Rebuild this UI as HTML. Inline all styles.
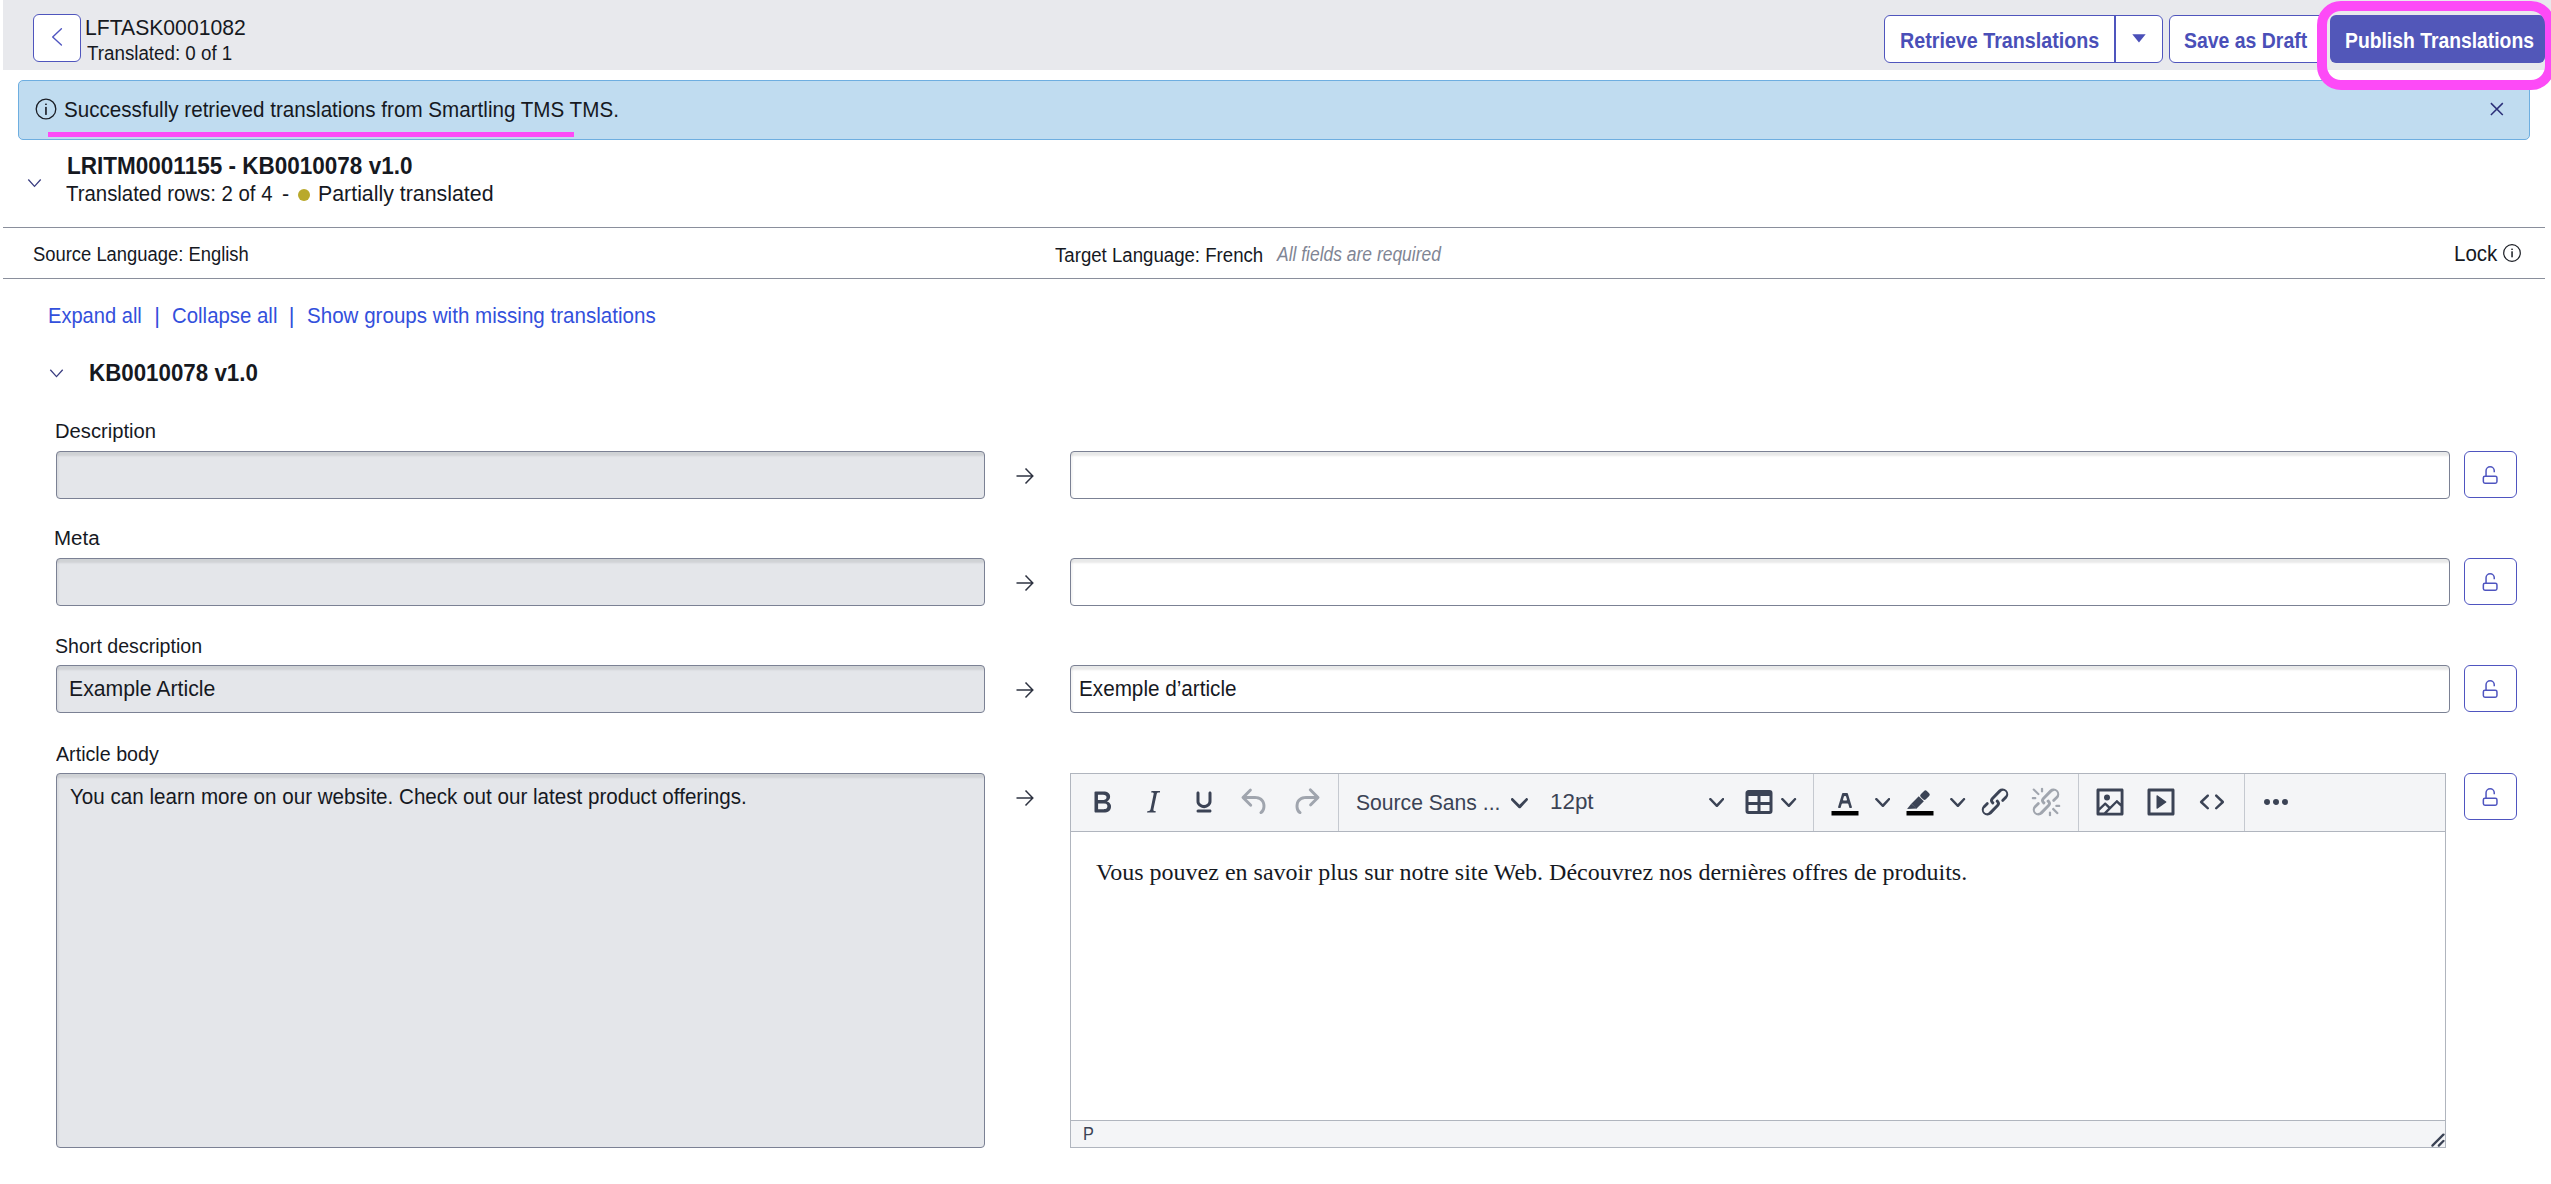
<!DOCTYPE html>
<html><head><meta charset="utf-8">
<style>
*{box-sizing:border-box;margin:0;padding:0}
html,body{width:2551px;height:1184px;overflow:hidden;background:#fff}
body{position:relative;font-family:"Liberation Sans",sans-serif;color:#16191f}
.a{position:absolute;white-space:nowrap;line-height:1}
.s{display:inline-block;transform-origin:0 0}
.hdr{position:absolute;left:3px;top:0;width:2548px;height:70px;background:#e8e9ed}
.btn{position:absolute;border:1px solid #4f55bd;border-radius:6px;background:#fff}
.bt{color:#4a4fb8;font-weight:bold;font-size:21px}
.alert{position:absolute;left:18px;top:80px;width:2512px;height:60px;background:#c0dcf0;border:1px solid #6eaee0;border-radius:5px}
.hl{position:absolute;left:3px;width:2542px;height:1px;background:#8a8f9c}
.lnk{color:#3350dc;font-size:22px}
.lbl{font-size:19.5px}
.fld{position:absolute;border:1px solid #7b8194;border-radius:4px;overflow:hidden}
.src{background:#e4e6ea}
.src:before{content:"";position:absolute;left:0;right:0;top:0;bottom:0;box-shadow:inset 0 5px 2px -1px rgba(0,15,10,.09),inset 3px 0 2px -1px rgba(0,15,10,.045)}
.tgt{background:#fff}
.tgt:before{content:"";position:absolute;left:0;right:0;top:0;bottom:0;box-shadow:inset 0 5px 2px -1px rgba(0,15,10,.09),inset 3px 0 2px -1px rgba(0,15,10,.045)}
.lock{position:absolute;left:2464px;width:53px;height:47px;border:1px solid #4f55c0;border-radius:6px;background:#fff}
.lock svg{position:absolute;left:17px;top:13px}
.arr{position:absolute;left:1014px}
.ic{position:absolute;top:784px;fill:#3b4355}
.chev{position:absolute;top:798px}
.sep{position:absolute;top:774px;width:1px;height:57px;background:#c5c9d0}
</style></head><body>

<div class="hdr"></div>
<div class="btn" style="left:33px;top:14px;width:48px;height:48px"></div>
<svg class="a" style="left:33px;top:14px" width="48" height="48" viewBox="0 0 48 48"><path d="M28.4 14.8 L19.7 23 L28.4 31" fill="none" stroke="#4f55c0" stroke-width="1.4" stroke-linecap="round" stroke-linejoin="round"/></svg>
<div class="a" style="left:85.4px;top:16.9px;font-size:22px"><span class="s" id="t_lftask" style="transform:scaleX(0.9614)">LFTASK0001082</span></div>
<div class="a" style="left:87px;top:43px;font-size:20px"><span class="s" id="t_tr01" style="transform:scaleX(0.938)">Translated: 0 of 1</span></div>

<div class="btn" style="left:1884px;top:15px;width:279px;height:48px"></div>
<div class="a" style="left:2114px;top:15px;width:2px;height:48px;background:#4f55bd"></div>
<div class="a bt" style="left:1900.1px;top:30px;font-size:22px"><span class="s" id="t_retr" style="transform:scaleX(0.8957)">Retrieve Translations</span></div>
<svg class="a" style="left:2131px;top:33px" width="16" height="10" viewBox="0 0 16 10"><path d="M1.3 1.2 H14.7 L8 9.4 Z" fill="#4a4fb8"/></svg>
<div class="btn" style="left:2169px;top:15px;width:157px;height:48px"></div>
<div class="a bt" style="left:2184.2px;top:30px;font-size:22px"><span class="s" id="t_draft" style="transform:scaleX(0.8833)">Save as Draft</span></div>
<div class="a" style="left:2330px;top:15px;width:215px;height:48px;background:#5257b9;border-radius:6px"></div>
<div class="a bt" style="left:2345.1px;top:30px;color:#fff;font-size:22px"><span class="s" id="t_pub" style="transform:scaleX(0.8783)">Publish Translations</span></div>

<div class="alert"></div>
<svg class="a" style="left:35px;top:98px" width="22" height="22" viewBox="0 0 22 22"><circle cx="11" cy="11" r="9.8" fill="none" stroke="#1b1e25" stroke-width="1.3"/><rect x="10.05" y="8.9" width="1.8" height="8" fill="#2a2e38"/><rect x="10.05" y="5.6" width="1.8" height="1.4" fill="#2a2e38"/></svg>
<div class="a" style="left:63.7px;top:100.05px;font-size:21.25px"><span class="s" id="t_alert" style="transform:scaleX(0.9701)">Successfully retrieved translations from Smartling TMS TMS.</span></div>
<div class="a" style="left:48px;top:132px;width:526px;height:5px;background:#fd4af7"></div>
<svg class="a" style="left:2486px;top:99px" width="21" height="21" viewBox="0 0 21 21"><path d="M4.9 4.1 L16.8 16 M16.8 4.1 L4.9 16" stroke="#2b2f78" stroke-width="1.5"/></svg>

<svg class="a" style="left:26px;top:176px" width="17" height="13" viewBox="0 0 17 13"><path d="M2.3 3.5 L8.5 10.4 L14.7 3.5" fill="none" stroke="#3a3d80" stroke-width="1.3"/></svg>
<div class="a" style="left:66.5px;top:155.35px;font-size:23px;font-weight:bold"><span class="s" id="t_lritm" style="transform:scaleX(0.979)">LRITM0001155 - KB0010078 v1.0</span></div>
<div class="a" style="left:65.7px;top:184.15px;font-size:21.5px"><span class="s" id="t_rows" style="transform:scaleX(0.9478)">Translated rows: 2 of 4</span></div>
<div class="a" style="left:282px;top:183.5px;font-size:21.5px">-</div>
<div class="a" style="left:298px;top:189px;width:12px;height:12px;border-radius:50%;background:#b9a92b"></div>
<div class="a" style="left:317.9px;top:184.15px;font-size:21.5px"><span class="s" id="t_partial" style="transform:scaleX(0.9924)">Partially translated</span></div>

<div class="hl" style="top:227px"></div>
<div class="a" style="left:33.1px;top:243.95px;font-size:20px"><span class="s" id="t_src" style="transform:scaleX(0.9195)">Source Language: English</span></div>
<div class="a" style="left:1054.5px;top:244.6px;font-size:20px"><span class="s" id="t_tgt" style="transform:scaleX(0.9316)">Target Language: French</span></div>
<div class="a" style="left:1277.4px;top:243.6px;font-size:20px;font-style:italic;color:#7f8594"><span class="s" id="t_ital" style="transform:scaleX(0.8724)">All fields are required</span></div>
<div class="a" style="left:2453.7px;top:243.2px;font-size:22px"><span class="s" id="t_lock" style="transform:scaleX(0.9335)">Lock</span></div>
<svg class="a" style="left:2503px;top:244px" width="19" height="19" viewBox="0 0 19 19"><circle cx="9" cy="9" r="8.3" fill="none" stroke="#1b1e25" stroke-width="1.2"/><rect x="8.3" y="7.3" width="1.5" height="6" fill="#1b1e25"/><rect x="8.3" y="4.6" width="1.5" height="1.4" fill="#1b1e25"/></svg>
<div class="hl" style="top:278px"></div>

<div class="a lnk" style="left:47.7px;top:305.1px;font-size:22px"><span class="s" id="t_exp" style="transform:scaleX(0.9132)">Expand all</span></div>
<div class="a lnk" style="left:154.2px;top:305.1px">|</div>
<div class="a lnk" style="left:171.9px;top:305.1px;font-size:22px"><span class="s" id="t_col" style="transform:scaleX(0.9271)">Collapse all</span></div>
<div class="a lnk" style="left:288.7px;top:305.1px">|</div>
<div class="a lnk" style="left:306.9px;top:305.1px;font-size:22px"><span class="s" id="t_show" style="transform:scaleX(0.9349)">Show groups with missing translations</span></div>

<svg class="a" style="left:48px;top:366px" width="17" height="14" viewBox="0 0 17 14"><path d="M2.3 3.8 L8.5 10.6 L14.7 3.8" fill="none" stroke="#3a3d80" stroke-width="1.3"/></svg>
<div class="a" style="left:89.1px;top:362.35px;font-size:23px;font-weight:bold"><span class="s" id="t_kb" style="transform:scaleX(0.971)">KB0010078 v1.0</span></div>

<!-- rows -->
<div class="a lbl" style="left:54.5px;top:421.2px;font-size:20px"><span class="s" id="t_desc" style="transform:scaleX(1.0094)">Description</span></div>
<div class="fld src" style="left:56px;top:451px;width:929px;height:48px"></div>
<svg class="arr" style="top:466px" width="22" height="20" viewBox="0 0 22 20"><path d="M2.5 10 H18.5 M11.5 2.5 L18.8 10 L11.5 17.5" fill="none" stroke="#2e3341" stroke-width="1.5"/></svg>
<div class="fld tgt" style="left:1070px;top:451px;width:1380px;height:48px"></div>
<div class="lock" style="top:451px"><svg width="19" height="20" viewBox="0 0 19 20"><path d="M4.05 11.2 V5.85 A4.1 4.1 0 0 1 12.25 5.85 V7.3" fill="none" stroke="#4f55c0" stroke-width="1.5"/><rect x="1.35" y="11.15" width="13.6" height="7" rx="1.6" fill="none" stroke="#4f55c0" stroke-width="1.5"/></svg></div>

<div class="a lbl" style="left:54px;top:527.9px;font-size:20px"><span class="s" id="t_meta" style="transform:scaleX(1.0255)">Meta</span></div>
<div class="fld src" style="left:56px;top:558px;width:929px;height:48px"></div>
<svg class="arr" style="top:573px" width="22" height="20" viewBox="0 0 22 20"><path d="M2.5 10 H18.5 M11.5 2.5 L18.8 10 L11.5 17.5" fill="none" stroke="#2e3341" stroke-width="1.5"/></svg>
<div class="fld tgt" style="left:1070px;top:558px;width:1380px;height:48px"></div>
<div class="lock" style="top:558px"><svg width="19" height="20" viewBox="0 0 19 20"><path d="M4.05 11.2 V5.85 A4.1 4.1 0 0 1 12.25 5.85 V7.3" fill="none" stroke="#4f55c0" stroke-width="1.5"/><rect x="1.35" y="11.15" width="13.6" height="7" rx="1.6" fill="none" stroke="#4f55c0" stroke-width="1.5"/></svg></div>

<div class="a lbl" style="left:55px;top:636.45px;font-size:20px"><span class="s" id="t_short" style="transform:scaleX(0.9798)">Short description</span></div>
<div class="fld src" style="left:56px;top:665px;width:929px;height:48px"></div>
<div class="a" style="left:69.2px;top:677.8px;font-size:22px"><span class="s" id="t_ex" style="transform:scaleX(0.9647)">Example Article</span></div>
<svg class="arr" style="top:680px" width="22" height="20" viewBox="0 0 22 20"><path d="M2.5 10 H18.5 M11.5 2.5 L18.8 10 L11.5 17.5" fill="none" stroke="#2e3341" stroke-width="1.5"/></svg>
<div class="fld tgt" style="left:1070px;top:665px;width:1380px;height:48px"></div>
<div class="a" style="left:1078.9px;top:678.4px;font-size:22px"><span class="s" id="t_exf" style="transform:scaleX(0.9402)">Exemple d’article</span></div>
<div class="lock" style="top:665px"><svg width="19" height="20" viewBox="0 0 19 20"><path d="M4.05 11.2 V5.85 A4.1 4.1 0 0 1 12.25 5.85 V7.3" fill="none" stroke="#4f55c0" stroke-width="1.5"/><rect x="1.35" y="11.15" width="13.6" height="7" rx="1.6" fill="none" stroke="#4f55c0" stroke-width="1.5"/></svg></div>

<div class="a lbl" style="left:56px;top:744.45px;font-size:20px"><span class="s" id="t_art" style="transform:scaleX(0.9837)">Article body</span></div>
<div class="fld src" style="left:56px;top:773px;width:929px;height:375px"></div>
<div class="a" style="left:69.9px;top:786.25px;font-size:22px"><span class="s" id="t_you" style="transform:scaleX(0.9363)">You can learn more on our website. Check out our latest product offerings.</span></div>
<svg class="arr" style="top:788px" width="22" height="20" viewBox="0 0 22 20"><path d="M2.5 10 H18.5 M11.5 2.5 L18.8 10 L11.5 17.5" fill="none" stroke="#2e3341" stroke-width="1.5"/></svg>
<div class="lock" style="top:773px"><svg width="19" height="20" viewBox="0 0 19 20"><path d="M4.05 11.2 V5.85 A4.1 4.1 0 0 1 12.25 5.85 V7.3" fill="none" stroke="#4f55c0" stroke-width="1.5"/><rect x="1.35" y="11.15" width="13.6" height="7" rx="1.6" fill="none" stroke="#4f55c0" stroke-width="1.5"/></svg></div>

<!-- editor -->
<div class="a" style="left:1070px;top:773px;width:1376px;height:375px;border:1px solid #b0b5be;background:#fff"></div>
<div class="a" style="left:1071px;top:774px;width:1374px;height:58px;background:#f4f5f7;border-bottom:1px solid #b0b5be"></div>
<div class="a" style="left:1071px;top:1120px;width:1374px;height:27px;background:#f4f5f7;border-top:1px solid #b0b5be"></div>
<div class="sep" style="left:1338px"></div>
<div class="sep" style="left:1813px"></div>
<div class="sep" style="left:2078px"></div>
<div class="sep" style="left:2244px"></div>

<svg class="ic" style="left:1084px" width="36" height="36" viewBox="0 0 24 24"><path d="M7.8 19c-.3 0-.5 0-.6-.2l-.2-.5V5.7c0-.2 0-.4.2-.5l.6-.2h5c1.5 0 2.7.3 3.5 1 .7.6 1.1 1.4 1.1 2.5a3 3 0 0 1-.6 1.9c-.4.6-1 1-1.6 1.2.4.1.9.3 1.3.6s.8.7 1 1.2c.4.4.5 1 .5 1.6 0 1.3-.4 2.3-1.3 3-.8.7-2.1 1-3.8 1H7.8Zm5-8.3c.6 0 1.2-.1 1.6-.5.4-.3.6-.7.6-1.3 0-1.1-.8-1.7-2.3-1.7H9.3v3.5h3.4Zm.5 6c.7 0 1.3-.1 1.7-.4.4-.4.6-.9.6-1.5s-.2-1-.7-1.4c-.4-.3-1-.4-2-.4H9.4v3.8h4Z" fill-rule="evenodd"/></svg>
<svg class="ic" style="left:1135px" width="36" height="36" viewBox="0 0 24 24"><path d="m16.7 4.7-.1.9h-.3c-.6 0-1 0-1.4.3-.3.3-.4.6-.5 1.1l-2.1 9.8v.6c0 .5.4.8 1.4.8h.2l-.2.8H8l.2-.8h.2c1.1 0 1.8-.5 2-1.5l2-9.8.1-.5c0-.6-.4-.8-1.4-.8h-.3l.2-.9h5.8Z" fill-rule="evenodd"/></svg>
<svg class="ic" style="left:1185.5px" width="36" height="36" viewBox="0 0 24 24"><path d="M16 5c.6 0 1 .4 1 1v5.5a4 4 0 0 1-.4 1.8l-1 1.4a5.3 5.3 0 0 1-5.5 1 5 5 0 0 1-1.6-1c-.5-.4-.8-.9-1.1-1.4a4 4 0 0 1-.4-1.8V6c0-.6.4-1 1-1s1 .4 1 1v5.5c0 .3 0 .6.2 1l.6.7a3.3 3.3 0 0 0 2.2.8 3.4 3.4 0 0 0 2.2-.8c.3-.2.4-.5.6-.8l.2-.9V6c0-.6.4-1 1-1ZM8 17h8c.6 0 1 .4 1 1s-.4 1-1 1H8a1 1 0 0 1 0-2Z" fill-rule="evenodd"/></svg>
<svg class="ic" style="left:1237px;fill:#a0a5ae" width="36" height="36" viewBox="0 0 24 24"><path d="M6.4 8H12c3.7 0 6.2 2 6.8 5.1.6 2.7-.4 5.6-2.3 6.8a1 1 0 0 1-1-1.8c1.1-.6 1.8-2.7 1.4-4.6-.5-2.1-2.1-3.5-4.9-3.5H6.4l3.3 3.3a1 1 0 1 1-1.4 1.4l-5-5a1 1 0 0 1 0-1.4l5-5a1 1 0 0 1 1.4 1.4L6.4 8Z" fill-rule="nonzero"/></svg>
<svg class="ic" style="left:1287.5px;fill:#a0a5ae" width="36" height="36" viewBox="0 0 24 24"><path d="M17.6 10H12c-2.8 0-4.4 1.4-4.9 3.5-.4 2 .3 4 1.4 4.6a1 1 0 1 1-1 1.8c-2-1.2-2.9-4.1-2.3-6.8.6-3 3-5.1 6.8-5.1h5.6l-3.3-3.3a1 1 0 1 1 1.4-1.4l5 5a1 1 0 0 1 0 1.4l-5 5a1 1 0 0 1-1.4-1.4l3.3-3.3Z" fill-rule="nonzero"/></svg>

<div class="a" style="left:1356px;top:791.8px;font-size:22px;color:#3b4355"><span class="s" id="t_ff" style="transform:scaleX(0.9598)">Source Sans ...</span></div>
<svg class="chev" style="left:1511px" width="17" height="12" viewBox="0 0 10 7"><path d="M8.7 .2c.3-.3.8-.3 1 0 .4.4.4.9 0 1.2L5.7 5.8c-.3.3-.9.3-1.2 0L.2 1.4a.8.8 0 0 1 0-1.2c.3-.3.8-.3 1.1 0L5 4l3.7-3.8Z" fill="#3b4355"/></svg>
<div class="a" style="left:1550.2px;top:791.35px;font-size:22px;color:#3b4355"><span class="s" id="t_pt" style="transform:scaleX(1.0167)">12pt</span></div>
<svg class="chev" style="left:1708.5px" width="15.5" height="10.5" viewBox="0 0 10 7"><path d="M8.7 .2c.3-.3.8-.3 1 0 .4.4.4.9 0 1.2L5.7 5.8c-.3.3-.9.3-1.2 0L.2 1.4a.8.8 0 0 1 0-1.2c.3-.3.8-.3 1.1 0L5 4l3.7-3.8Z" fill="#3b4355"/></svg>
<svg class="ic" style="left:1741px" width="36" height="36" viewBox="0 0 24 24"><path d="M19 4a2 2 0 0 1 2 2v12a2 2 0 0 1-2 2H5a2 2 0 0 1-2-2V6c0-1.1.9-2 2-2h14ZM5 14v4h6v-4H5Zm14 0h-6v4h6v-4Zm0-6h-6v4h6V8ZM5 8v4h6V8H5Z" fill-rule="nonzero"/></svg>
<svg class="chev" style="left:1781px" width="15.5" height="10.5" viewBox="0 0 10 7"><path d="M8.7 .2c.3-.3.8-.3 1 0 .4.4.4.9 0 1.2L5.7 5.8c-.3.3-.9.3-1.2 0L.2 1.4a.8.8 0 0 1 0-1.2c.3-.3.8-.3 1.1 0L5 4l3.7-3.8Z" fill="#3b4355"/></svg>

<svg class="ic" style="left:1827px" width="36" height="36" viewBox="0 0 24 24"><path d="M3 18h18v3H3z" fill="#000"/><path d="M8.7 16h-.8a.5.5 0 0 1-.5-.6l2.7-9c.1-.3.3-.4.5-.4h2.8c.2 0 .4.1.5.4l2.7 9a.5.5 0 0 1-.5.6h-.8a.5.5 0 0 1-.4-.4l-.7-2.2c0-.3-.3-.4-.5-.4h-3.4c-.2 0-.4.1-.5.4l-.7 2.2c0 .3-.2.4-.4.4Zm2.6-7.6-.6 2a.5.5 0 0 0 .5.6h1.6a.5.5 0 0 0 .5-.6l-.6-2c0-.3-.3-.4-.5-.4h-.4c-.2 0-.4.1-.5.4Z"/></svg>
<svg class="chev" style="left:1874.5px" width="15.5" height="10.5" viewBox="0 0 10 7"><path d="M8.7 .2c.3-.3.8-.3 1 0 .4.4.4.9 0 1.2L5.7 5.8c-.3.3-.9.3-1.2 0L.2 1.4a.8.8 0 0 1 0-1.2c.3-.3.8-.3 1.1 0L5 4l3.7-3.8Z" fill="#3b4355"/></svg>
<svg class="ic" style="left:1902px" width="36" height="36" viewBox="0 0 24 24"><path d="M3 18h18v3H3z" fill="#000"/><g transform="translate(10.04 12.69) rotate(-45)"><rect x="4.6" y="-2.4" width="5.7" height="4.8" rx="1.3"/><rect x="-3" y="-2.4" width="7" height="4.8"/><path d="M-3.1 -2.4 L-7.5 -1.95 L-2.75 2.35 Z"/></g></svg>
<svg class="chev" style="left:1950px" width="15.5" height="10.5" viewBox="0 0 10 7"><path d="M8.7 .2c.3-.3.8-.3 1 0 .4.4.4.9 0 1.2L5.7 5.8c-.3.3-.9.3-1.2 0L.2 1.4a.8.8 0 0 1 0-1.2c.3-.3.8-.3 1.1 0L5 4l3.7-3.8Z" fill="#3b4355"/></svg>
<svg class="ic" style="left:1976.5px" width="36" height="36" viewBox="0 0 24 24"><path d="M6.2 12.3a1 1 0 0 1 1.4 1.4l-2 2a2 2 0 1 0 2.6 2.8l4.8-4.8a1 1 0 0 0 0-1.4 1 1 0 1 1 1.4-1.3 2.9 2.9 0 0 1 0 4L9.6 20a3.9 3.9 0 0 1-5.5-5.5l2-2Zm11.6-.6a1 1 0 0 1-1.4-1.4l2-2a2 2 0 1 0-2.6-2.8L11 10.3a1 1 0 0 0 0 1.4A1 1 0 1 1 9.6 13a2.9 2.9 0 0 1 0-4L14.4 4a3.9 3.9 0 0 1 5.5 5.5l-2 2Z" fill-rule="nonzero"/></svg>
<svg class="ic" style="left:2028px;fill:#a0a5ae" width="36" height="36" viewBox="0 0 24 24"><path d="M6.2 12.3a1 1 0 0 1 1.4 1.4l-2.1 2a2 2 0 1 0 2.7 2.8l4.8-4.8a1 1 0 0 0 0-1.4 1 1 0 1 1 1.4-1.3 2.9 2.9 0 0 1 0 4L9.6 20a3.9 3.9 0 0 1-5.5-5.5l2-2Zm11.6-.6a1 1 0 0 1-1.4-1.4l2.1-2a2 2 0 1 0-2.7-2.8L11 10.3a1 1 0 0 0 0 1.4A1 1 0 1 1 9.6 13a2.9 2.9 0 0 1 0-4L14.4 4a3.9 3.9 0 0 1 5.5 5.5l-2 2ZM7.6 6.3a.8.8 0 0 1-1 1.1L3.3 4.2a.7.7 0 1 1 1-1l3.2 3.1ZM5.1 8.6a.8.8 0 0 1 0 1.5H3a.8.8 0 0 1 0-1.5H5Zm5-3.5a.8.8 0 0 1-1.5 0V3a.8.8 0 0 1 1.5 0v2Zm6 11.8a.8.8 0 0 1 1-1l3.2 3.2a.8.8 0 0 1-1 1L16 17Zm-2.2 2a.8.8 0 0 1 1.5 0V21a.8.8 0 0 1-1.5 0V19Zm5-3.5a.7.7 0 0 1 0-1.5H21a.8.8 0 0 1 0 1.5h-2Z" fill-rule="nonzero"/></svg>

<svg class="ic" style="left:2092px" width="36" height="36" viewBox="0 0 24 24"><path d="m5 15.7 3.3-3.2c.3-.3.7-.3 1 0L12 15l4.1-4c.3-.4.8-.4 1 0l2 1.9V5H5v10.7ZM5 18V19h3l2.8-2.9-2-2L5 17.9Zm14-3-2.5-2.4-6.4 6.5H19v-4ZM4 3h16c.6 0 1 .4 1 1v16c0 .6-.4 1-1 1H4a1 1 0 0 1-1-1V4c0-.6.4-1 1-1Zm6 8a2 2 0 1 1 0-4 2 2 0 0 1 0 4Z" fill-rule="nonzero"/></svg>
<svg class="ic" style="left:2143px" width="36" height="36" viewBox="0 0 24 24"><path d="M4 3h16c.6 0 1 .4 1 1v16c0 .6-.4 1-1 1H4a1 1 0 0 1-1-1V4c0-.6.4-1 1-1Zm1 2v14h14V5H5Zm4.8 2.6 5.6 4a.5.5 0 0 1 0 .8l-5.6 4A.5.5 0 0 1 9 16V8a.5.5 0 0 1 .8-.4Z" fill-rule="nonzero"/></svg>
<svg class="ic" style="left:2194px" width="36" height="36" viewBox="0 0 24 24"><path d="M9.8 15.7c.3.3.3.8 0 1-.3.4-.9.4-1.2 0l-4.4-4.1a.8.8 0 0 1 0-1.2l4.4-4.2c.3-.3.9-.3 1.2 0 .3.3.3.8 0 1.1L6 12l3.8 3.7ZM14.2 15.7c-.3.3-.3.8 0 1 .4.4.9.4 1.2 0l4.4-4.1c.3-.3.3-.9 0-1.2l-4.4-4.2a.8.8 0 0 0-1.2 0c-.3.3-.3.8 0 1.1L18 12l-3.8 3.7Z"/></svg>
<svg class="ic" style="left:2258px" width="36" height="36" viewBox="0 0 24 24"><path d="M6 10a2 2 0 0 0-2 2c0 1.1.9 2 2 2a2 2 0 0 0 2-2 2 2 0 0 0-2-2Zm12 0a2 2 0 0 0-2 2c0 1.1.9 2 2 2a2 2 0 0 0 2-2 2 2 0 0 0-2-2Zm-6 0a2 2 0 0 0-2 2c0 1.1.9 2 2 2a2 2 0 0 0 2-2 2 2 0 0 0-2-2Z" fill-rule="nonzero"/></svg>

<div class="a" style="left:1096px;top:859.5px;font-size:24px;font-family:'Liberation Serif',serif;color:#16191f">Vous pouvez en savoir plus sur notre site Web. Découvrez nos dernières offres de produits.</div>
<div class="a" style="left:1083px;top:1124.6px;font-size:18.5px;color:#3b4355"><span class="s" style="transform:scaleX(0.88)">P</span></div>
<svg class="a" style="left:2429.5px;top:1132px" width="16" height="16" viewBox="0 0 10 10"><path d="M8.1 1.1A.5.5 0 1 1 9 2l-7 7A.5.5 0 1 1 1 8l7-7ZM8.1 5.1A.5.5 0 1 1 9 6l-3 3A.5.5 0 1 1 5 8l3-3Z" fill="#3b4355"/></svg>

<div class="a" style="left:2317px;top:1px;width:238px;height:89px;border:10px solid #fd4af7;border-radius:24px"></div>
</body></html>
